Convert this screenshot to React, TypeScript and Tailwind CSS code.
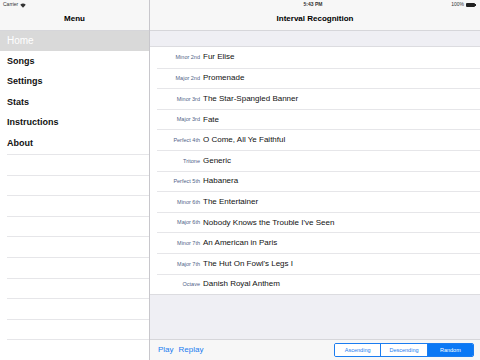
import React from 'react';

const menu = ['Home', 'Songs', 'Settings', 'Stats', 'Instructions', 'About'];

const intervals: Array<[string, string]> = [
  ['Minor 2nd', 'Fur Elise'],
  ['Major 2nd', 'Promenade'],
  ['Minor 3rd', 'The Star-Spangled Banner'],
  ['Major 3rd', 'Fate'],
  ['Perfect 4th', 'O Come, All Ye Faithful'],
  ['Tritone', 'Generic'],
  ['Perfect 5th', 'Habanera'],
  ['Minor 6th', 'The Entertainer'],
  ['Major 6th', "Nobody Knows the Trouble I've Seen"],
  ['Minor 7th', 'An American in Paris'],
  ['Major 7th', "The Hut On Fowl's Legs I"],
  ['Octave', 'Danish Royal Anthem'],
];

export default function App() {
  return (
    <div
      className="w-[480px] h-[360px] flex overflow-hidden bg-white text-black"
      style={{ fontFamily: '"Liberation Sans", Arial, sans-serif' }}
    >
      {/* master */}
      <div className="w-[150px] h-full flex flex-col border-r border-[#c8c7cc] bg-white">
        <div className="h-[31px] bg-[#f7f7f7] border-b border-[#d6d6da] flex flex-col">
          <div className="h-[10px] flex items-center pl-[3px] gap-[2px] text-[5px] text-[#333]">
            <span>Carrier</span>
            <svg width="6" height="5" viewBox="0 0 12 9">
              <path d="M6 9 L0.5 3 A8 8 0 0 1 11.5 3 Z" fill="#333" />
            </svg>
          </div>
          <div className="flex-1 flex items-center justify-center text-[8px] font-semibold pb-[2px]">Menu</div>
        </div>
        {menu.map((m, i) => (
          <div
            key={m}
            className={`h-[20.6px] shrink-0 flex items-center pl-[7px] ${
              i === 0 ? 'bg-[#d9d9d9] text-white text-[10px]' : 'font-semibold text-[9px] text-[#111]'
            }`}
          >
            {m}
          </div>
        ))}
        <div className="flex-1 flex flex-col">
          {[...Array(10)].map((_, i) => (
            <div key={i} className="h-[20.6px] shrink-0 ml-[7px] border-t border-[#e6e6e9]" />
          ))}
        </div>
      </div>

      {/* detail */}
      <div className="flex-1 h-full flex flex-col bg-[#efeff4]">
        <div className="h-[31px] bg-[#f7f7f7] border-b border-[#d6d6da] flex flex-col">
          <div className="h-[10px] flex items-center justify-between text-[5px] text-[#333] pr-[4px]">
            <span className="w-[40px]" />
            <span className="font-semibold">5:43 PM</span>
            <span className="flex items-center gap-[2px] w-[40px] justify-end">
              100%
              <span className="w-[9px] h-[4px] bg-[#222] rounded-[1px]" />
              <span className="w-[1px] h-[2px] bg-[#222] -ml-[2px]" />
            </span>
          </div>
          <div className="flex-1 flex items-center justify-center text-[8px] font-semibold pb-[2px]">
            Interval Recognition
          </div>
        </div>
        <div className="h-[15px] shrink-0" />
        <div className="bg-white border-t border-b border-[#dcdce0]">
          {intervals.map(([label, song], i) => (
            <div key={label} className="h-[20.6px] flex items-stretch">
              <div className={`flex-1 flex items-center ml-[7px] ${i > 0 ? 'border-t border-[#e6e6e9]' : ''}`}>
                <span className="w-[43px] text-right text-[5.5px] text-[#4f5f87]">{label}</span>
                <span className="ml-[3px] text-[8px] text-[#111]">{song}</span>
              </div>
            </div>
          ))}
        </div>
        <div className="flex-1" />
        <div className="h-[20.6px] shrink-0 bg-[#f7f7f7] border-t border-[#d6d6da] flex items-center justify-between pl-[8px] pr-[6px]">
          <div className="flex gap-[5px] text-[8px] text-[#1a7cf0]">
            <span>Play</span>
            <span>Replay</span>
          </div>
          <div className="flex h-[14px] w-[140px] border border-[#1a7cf0] rounded-[2px] overflow-hidden text-[5.5px]">
            <div className="flex-1 flex items-center justify-center text-[#1a7cf0] bg-white">Ascending</div>
            <div className="flex-1 flex items-center justify-center text-[#1a7cf0] bg-white border-l border-[#1a7cf0]">Descending</div>
            <div className="flex-1 flex items-center justify-center text-white bg-[#0a78f5] border-l border-[#1a7cf0]">Random</div>
          </div>
        </div>
      </div>
    </div>
  );
}
